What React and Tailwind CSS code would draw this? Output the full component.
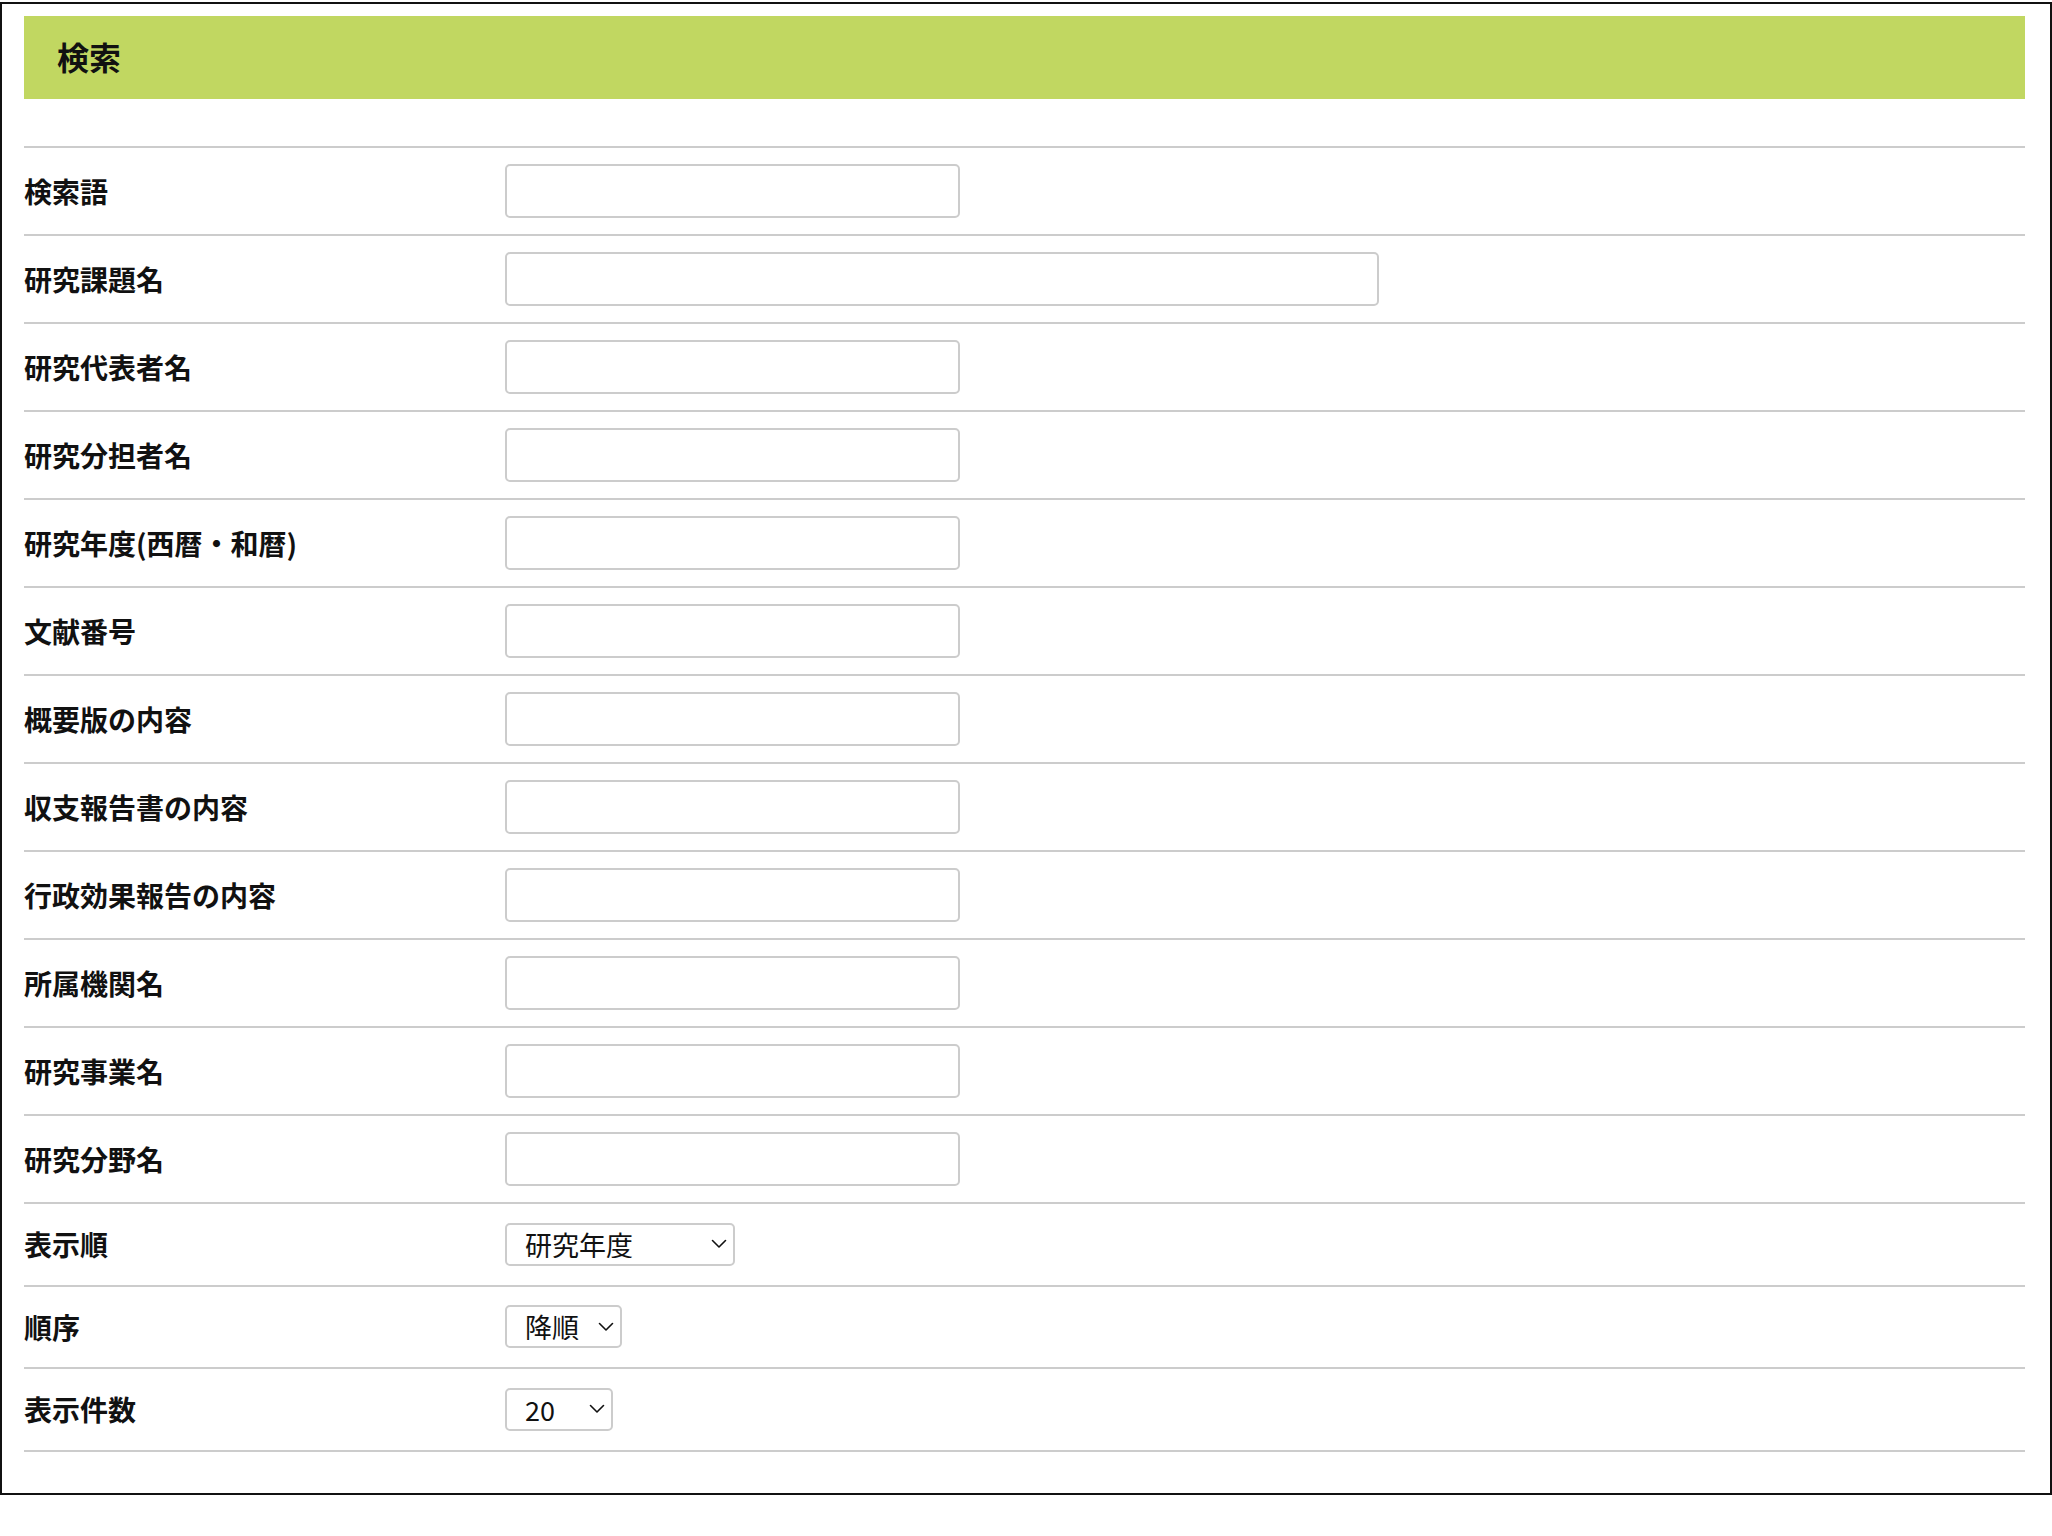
const fields = [
  { label: "検索語" },
  { label: "研究課題名", wide: true },
  { label: "研究代表者名" },
  { label: "研究分担者名" },
  { label: "研究年度(西暦・和暦)" },
  { label: "文献番号" },
  { label: "概要版の内容" },
  { label: "収支報告書の内容" },
  { label: "行政効果報告の内容" },
  { label: "所属機関名" },
  { label: "研究事業名" },
  { label: "研究分野名" },
];

const selects = [
  { label: "表示順", value: "研究年度", options: ["研究年度", "研究課題名", "文献番号"], width: "w-[230px]" },
  { label: "順序", value: "降順", options: ["降順", "昇順"], width: "w-[117px]" },
  { label: "表示件数", value: "20", options: ["20", "50", "100"], width: "w-[108px]" },
];

function Chevron() {
  return (
    <svg className="pointer-events-none absolute right-[8px] top-1/2 -translate-y-1/2" width="16" height="10" viewBox="0 0 16 10" fill="none">
      <path d="M1.5 1.5 L8 8 L14.5 1.5" stroke="#111" strokeWidth="1.6" strokeLinecap="round" strokeLinejoin="round" />
    </svg>
  );
}

export default function App() {
  return (
    <div className="bg-white min-h-[1536px] pt-[2px]" style={{ fontFamily: '"Noto Sans CJK JP", "Noto Sans", sans-serif' }}>
      <div className="w-[2052px] border-2 border-[#111] pt-[12px] pb-[41px] pl-[22px] pr-[25px]">
        <div className="h-[83px] bg-[#c1d761] flex items-center pl-[33px] pb-[3px]">
          <h2 className="text-[32px] font-bold text-[#111] leading-none">検索</h2>
        </div>

        <div className="mt-[47px] border-b-2 border-[#cccccc]">
          {fields.map((f) => (
            <div key={f.label} className="h-[88px] border-t-2 border-[#cccccc] flex items-center">
              <label className="w-[481px] shrink-0 text-[28px] font-bold text-[#111] leading-none">{f.label}</label>
              <input
                type="text"
                className={`${f.wide ? "w-[874px]" : "w-[455px]"} h-[54px] border-2 border-[#cccccc] rounded-[5px] bg-white px-3 text-[24px] outline-none`}
              />
            </div>
          ))}
          {selects.map((s) => (
            <div key={s.label} className="h-[82.5px] border-t-2 border-[#cccccc] flex items-center">
              <label className="w-[481px] shrink-0 text-[28px] font-bold text-[#111] leading-none">{s.label}</label>
              <div className={`relative ${s.width} h-[43px]`}>
                <select
                  defaultValue={s.value}
                  className="appearance-none w-full h-full border-2 border-[#cccccc] rounded-[5px] bg-white pl-[18px] pr-[30px] text-[27px] leading-none text-[#111] outline-none"
                  style={{ fontFamily: '"Noto Sans CJK JP", "Noto Sans", sans-serif' }}
                >
                  {s.options.map((o) => (
                    <option key={o} value={o}>{o}</option>
                  ))}
                </select>
                <Chevron />
              </div>
            </div>
          ))}
        </div>
      </div>
    </div>
  );
}
